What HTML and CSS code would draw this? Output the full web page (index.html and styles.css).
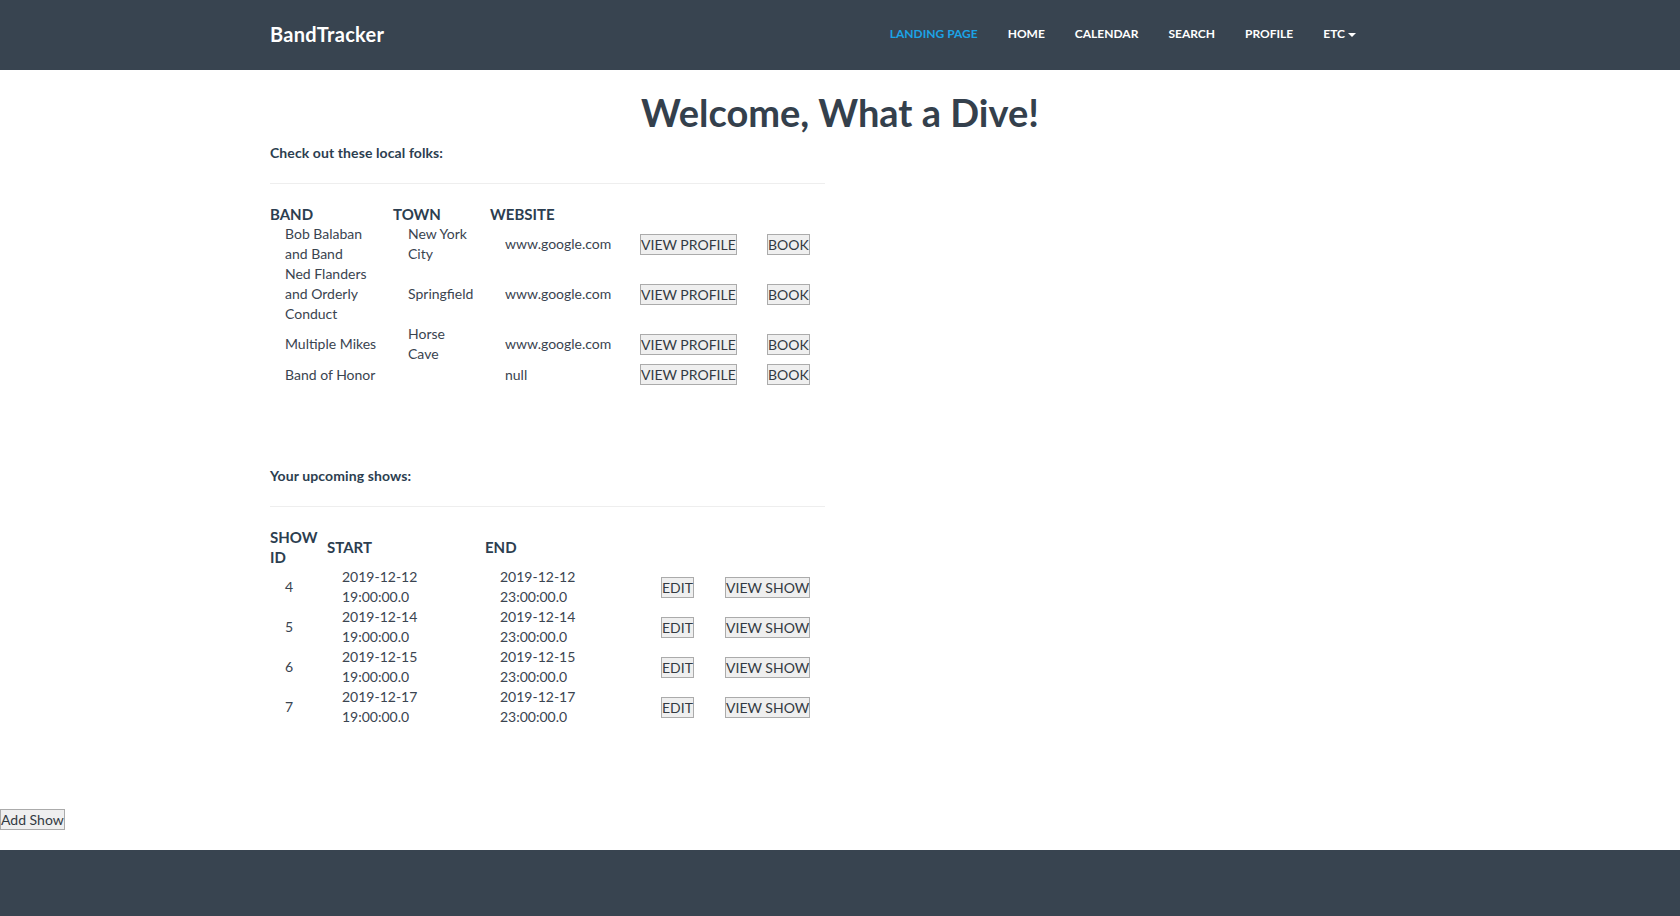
FILE: index.html
```html
<!DOCTYPE html>
<html lang="en">
<head>
<meta charset="utf-8">
<title>BandTracker</title>
<link rel="stylesheet" href="styles.css">
</head>
<body>
<nav class="navbar">
  <div class="container nav-inner">
    <a class="brand" href="#">BandTracker</a>
    <ul class="nav-links">
      <li><a class="active" href="#">Landing Page</a></li>
      <li><a href="#">Home</a></li>
      <li><a href="#">Calendar</a></li>
      <li><a href="#">Search</a></li>
      <li><a href="#">Profile</a></li>
      <li><a href="#">Etc<span class="caret"></span></a></li>
    </ul>
  </div>
</nav>

<main class="container">
  <h1 class="welcome">Welcome, What a Dive!</h1>

  <section class="half">
    <h5 class="section-title">Check out these local folks:</h5>
    <hr class="rule">
    <table class="list bands">
      <colgroup>
        <col class="c-band"><col class="c-town"><col class="c-site"><col class="c-view"><col class="c-book">
      </colgroup>
      <thead>
        <tr><th>BAND</th><th>TOWN</th><th>WEBSITE</th><th></th><th></th></tr>
      </thead>
      <tbody>
        <tr><td>Bob Balaban and Band</td><td class="town">New York City</td><td>www.google.com</td><td><button class="plain-btn">VIEW PROFILE</button></td><td><button class="plain-btn">BOOK</button></td></tr>
        <tr><td>Ned Flanders and Orderly Conduct</td><td class="town">Springfield</td><td>www.google.com</td><td><button class="plain-btn">VIEW PROFILE</button></td><td><button class="plain-btn">BOOK</button></td></tr>
        <tr><td>Multiple Mikes</td><td class="town">Horse Cave</td><td>www.google.com</td><td><button class="plain-btn">VIEW PROFILE</button></td><td><button class="plain-btn">BOOK</button></td></tr>
        <tr><td>Band of Honor</td><td class="town"></td><td>null</td><td><button class="plain-btn">VIEW PROFILE</button></td><td><button class="plain-btn">BOOK</button></td></tr>
      </tbody>
    </table>
  </section>

  <section class="half shows">
    <h5 class="section-title">Your upcoming shows:</h5>
    <hr class="rule">
    <table class="list show-table">
      <colgroup>
        <col class="c-id"><col class="c-start"><col class="c-end"><col class="c-edit"><col class="c-vshow">
      </colgroup>
      <thead>
        <tr><th>SHOW ID</th><th>START</th><th>END</th><th></th><th></th></tr>
      </thead>
      <tbody>
        <tr><td>4</td><td>2019-12-12 19:00:00.0</td><td>2019-12-12 23:00:00.0</td><td><button class="plain-btn">EDIT</button></td><td><button class="plain-btn">VIEW SHOW</button></td></tr>
        <tr><td>5</td><td>2019-12-14 19:00:00.0</td><td>2019-12-14 23:00:00.0</td><td><button class="plain-btn">EDIT</button></td><td><button class="plain-btn">VIEW SHOW</button></td></tr>
        <tr><td>6</td><td>2019-12-15 19:00:00.0</td><td>2019-12-15 23:00:00.0</td><td><button class="plain-btn">EDIT</button></td><td><button class="plain-btn">VIEW SHOW</button></td></tr>
        <tr><td>7</td><td>2019-12-17 19:00:00.0</td><td>2019-12-17 23:00:00.0</td><td><button class="plain-btn">EDIT</button></td><td><button class="plain-btn">VIEW SHOW</button></td></tr>
      </tbody>
    </table>
  </section>
</main>

<div class="add-row">
  <button class="plain-btn">Add Show</button>
</div>

<footer class="footer"></footer>
</body>
</html>
```

FILE: styles.css
```css
* { box-sizing: border-box; }

html, body {
  margin: 0;
  padding: 0;
}

body {
  font-family: Lato, "Helvetica Neue", Arial, sans-serif;
  font-size: 14px;
  line-height: 20px;
  color: #2c3e50;
  background: #ffffff;
}

.container {
  width: 1170px;
  padding: 0 15px;
  margin: 0 auto;
}

/* ---------- navbar ---------- */
.navbar {
  background: #384450;
  height: 70px;
}

.nav-inner {
  display: flex;
  align-items: center;
  height: 100%;
}

.brand {
  color: #ffffff;
  font-weight: 700;
  font-size: 20px;
  line-height: 20px;
  letter-spacing: 0.3px;
  text-decoration: none;
  margin-top: -2px;
}

.nav-links {
  display: flex;
  list-style: none;
  margin: -2px 39px 0 auto;
  padding: 0;
}

.nav-links a {
  display: block;
  padding: 0 15px;
  font-size: 12px;
  font-weight: 700;
  line-height: 20px;
  color: #ffffff;
  text-transform: uppercase;
  text-decoration: none;
}

.nav-links a.active {
  color: #1ba3e6;
}

.caret {
  display: inline-block;
  width: 0;
  height: 0;
  margin-left: 3px;
  vertical-align: middle;
  border-top: 4px solid #ffffff;
  border-left: 4px solid transparent;
  border-right: 4px solid transparent;
}

/* ---------- main ---------- */
.welcome {
  margin: 20px 0 0;
  font-size: 38px;
  line-height: 44px;
  font-weight: 700;
  text-align: center;
  color: #34404c;
}

.half {
  width: 555px;
}

.shows {
  margin-top: 81px;
}

.section-title {
  margin: 9px 0 0;
  font-size: 14px;
  line-height: 20px;
  font-weight: 700;
  letter-spacing: 0.1px;
  color: #2c3e50;
}

.rule {
  margin: 20px 0;
  border: 0;
  border-top: 1px solid #eeeeee;
  height: 0;
}

.list {
  width: 555px;
  table-layout: fixed;
  border-collapse: collapse;
  border-spacing: 0;
}

.list th {
  padding: 0;
  text-align: left;
  vertical-align: middle;
  font-size: 15px;
  line-height: 20px;
  font-weight: 700;
  color: #2c3e50;
}

.list td {
  padding: 0 10px 0 15px;
  vertical-align: middle;
  font-size: 14px;
  line-height: 20px;
  color: #3a4450;
}

.list td.town {
  padding-right: 14px;
}

.c-band { width: 123px; }
.c-town { width: 97px; }
.c-site { width: 135px; }
.c-view { width: 127px; }
.c-book { width: 73px; }

.c-id { width: 57px; }
.c-start { width: 158px; }
.c-end { width: 161px; }
.c-edit { width: 64px; }
.c-vshow { width: 115px; }

/* plain native-looking buttons */
.plain-btn {
  margin: 0;
  padding: 0;
  font-family: Lato, "Helvetica Neue", Arial, sans-serif;
  font-size: 14px;
  line-height: 19px;
  color: #333a42;
  background: #efefef;
  border: 1px solid #ababab;
  border-radius: 0;
  white-space: nowrap;
}

.add-row {
  margin: 82px 0 20px;
}

.add-row .plain-btn {
  display: block;
}

/* ---------- footer ---------- */
.footer {
  background: #384450;
  height: 66px;
}
```
